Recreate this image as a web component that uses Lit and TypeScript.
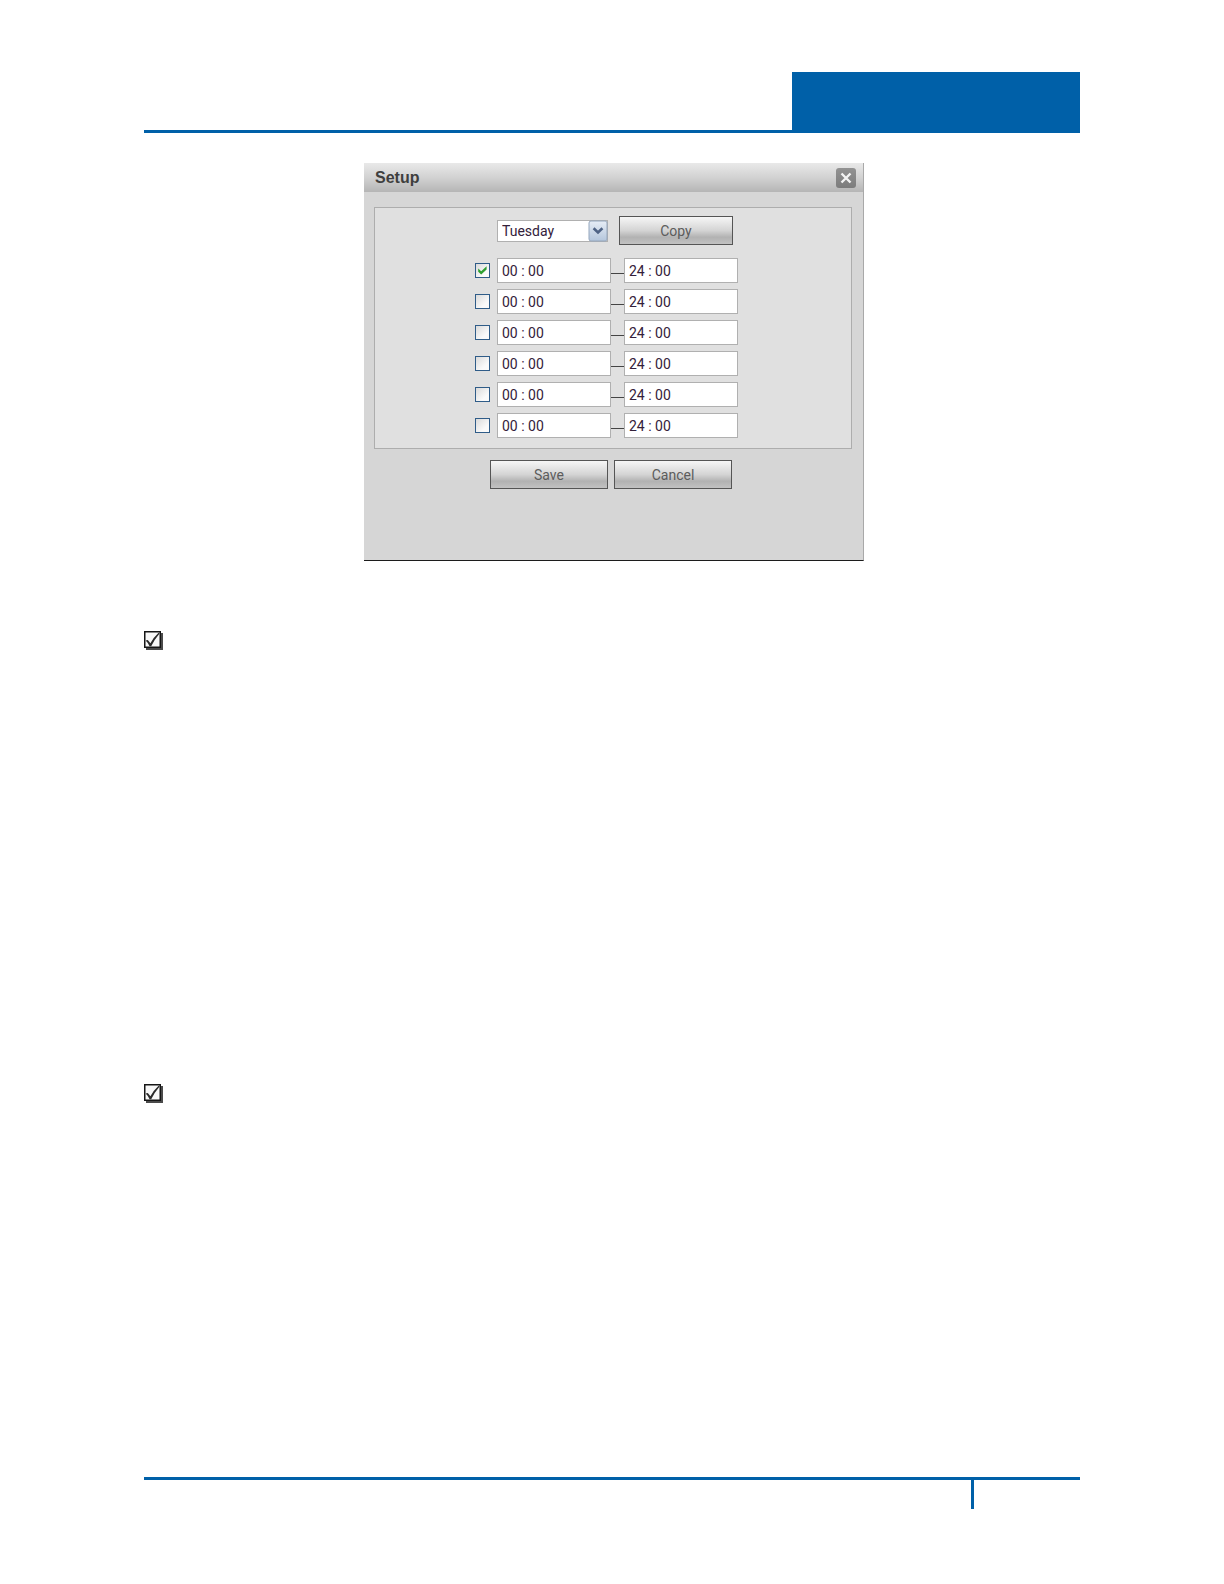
import { LitElement, html, css, svg } from "lit";
import { customElement, property, state } from "lit/decorators.js";

const DAYS = ["Sunday", "Monday", "Tuesday", "Wednesday", "Thursday", "Friday", "Saturday"];

interface Period {
  enabled: boolean;
  start: string;
  end: string;
}

@customElement("note-mark")
export class NoteMark extends LitElement {
  static styles = css`
    :host {
      display: block;
      line-height: 0;
    }
  `;

  render() {
    return html`<svg width="19" height="19" viewBox="0 0 19 19" aria-hidden="true">
      ${svg`
        <rect x="2" y="2" width="17" height="17" fill="#4a4a4a"></rect>
        <rect x="0.75" y="0.75" width="15.5" height="15.5" fill="#f8f8f8" stroke="#151515" stroke-width="1.5"></rect>
        <path d="M1.6 9.6 L3.8 9 L6.4 12.2 Q9.6 6.4 14.6 1.8 L15.6 2.4 Q10.6 8.2 7.2 15.2 L5.6 15.2 Q4 11.8 1.6 9.6 Z" fill="#2a2a2a"></path>
      `}
    </svg>`;
  }
}

@customElement("setup-dialog")
export class SetupDialog extends LitElement {
  @property({ type: String }) day = "Tuesday";

  @state() private periods: Period[] = Array.from({ length: 6 }, (_, i) => ({
    enabled: i === 0,
    start: "00 : 00",
    end: "24 : 00",
  }));

  static styles = css`
    :host {
      display: block;
      font-family: Roboto, "Liberation Sans", sans-serif;
      font-size: 14px;
    }
    * {
      box-sizing: border-box;
    }
    .dialog {
      background: #d6d6d6;
      border-right: 1px solid #a9a9a9;
      border-bottom: 1px solid #1c1c1c;
    }
    .titlebar {
      display: flex;
      align-items: center;
      justify-content: space-between;
      height: 29px;
      padding: 0 7px 0 11px;
      background: linear-gradient(#e9e9e9, #d2d2d2 50%, #b5b5b5);
    }
    .title {
      margin: 0;
      font: bold 16px/20px "Liberation Sans", Arial, sans-serif;
      color: #3f3f3f;
    }
    .close {
      display: block;
      width: 20px;
      height: 20px;
      padding: 0;
      border: 0;
      border-radius: 3px;
      background: linear-gradient(#929292, #7c7c7c);
      line-height: 0;
    }
    .content {
      padding: 15px 11px 71px 10px;
    }
    .schedule {
      display: flex;
      flex-direction: column;
      gap: 13px;
      min-width: 0;
      margin: 0;
      padding: 8px 0 10px 100px;
      border: 1px solid #adadad;
      background: #e0e0e0;
    }
    .day-row {
      display: flex;
      align-items: center;
      gap: 11px;
      padding-left: 22px;
    }
    .picker {
      display: grid;
      width: 111px;
      height: 22px;
    }
    .picker > * {
      grid-area: 1 / 1;
    }
    .select {
      appearance: none;
      width: 100%;
      margin: 0;
      padding: 0 22px 0 4px;
      border: 1px solid #b0b0b0;
      border-radius: 0;
      background: #fff;
      color: #33203a;
      font: inherit;
    }
    .arrow {
      justify-self: end;
      pointer-events: none;
    }
    .button {
      width: 118px;
      height: 29px;
      padding: 0;
      border: 1px solid #555;
      border-radius: 0;
      background: linear-gradient(#f6f6f6, #d4d4d4 50%, #b2b2b2 75%, #c2c2c2);
      color: #5c5c5c;
      font: inherit;
    }
    .copy {
      width: 114px;
    }
    .periods {
      display: grid;
      gap: 6px;
    }
    .period {
      display: flex;
      align-items: flex-start;
    }
    .box {
      display: grid;
      padding: 5px 7px 0 0;
    }
    .box > * {
      grid-area: 1 / 1;
    }
    .check {
      appearance: none;
      width: 15px;
      height: 15px;
      margin: 0;
      border: 1px solid #2f5c88;
      background: linear-gradient(135deg, #dadada, #fafafa 70%);
    }
    .tick {
      pointer-events: none;
    }
    .time {
      width: 114px;
      height: 25px;
      margin: 0;
      padding: 0 4px;
      border: 1px solid #b0b0b0;
      border-radius: 0;
      background: #fff;
      color: #33203a;
      font: inherit;
    }
    .dash {
      width: 13px;
      height: 1px;
      margin-top: 15px;
      background: #444;
    }
    .actions {
      display: flex;
      gap: 6px;
      padding: 11px 0 0 116px;
    }
  `;

  private toggle(index: number) {
    this.periods = this.periods.map((p, i) => (i === index ? { ...p, enabled: !p.enabled } : p));
  }

  private renderPeriod(period: Period, index: number) {
    const n = index + 1;
    return html`<div class="period">
      <div class="box">
        <input
          class="check"
          type="checkbox"
          aria-label="Enable period ${n}"
          .checked=${period.enabled}
          @change=${() => this.toggle(index)}
        />
        ${period.enabled
          ? html`<svg class="tick" width="15" height="15" viewBox="0 0 15 15" aria-hidden="true">
              <path d="M3.2 5.6 L6.2 8.2 L11.6 3.2 V6.4 L6.2 11.6 L3.2 8.8 Z" fill="#2fa030"></path>
            </svg>`
          : null}
      </div>
      <input class="time" type="text" aria-label="Period ${n} start" .value=${period.start} />
      <span class="dash"></span>
      <input class="time" type="text" aria-label="Period ${n} end" .value=${period.end} />
    </div>`;
  }

  render() {
    return html`<section class="dialog" role="dialog" aria-labelledby="title">
      <header class="titlebar">
        <h2 class="title" id="title">Setup</h2>
        <button class="close" type="button" aria-label="Close">
          <svg width="20" height="20" viewBox="0 0 20 20" aria-hidden="true">
            <path d="M5.5 5.5 L14.5 14.5 M14.5 5.5 L5.5 14.5" stroke="#f4f4f4" stroke-width="2.4" fill="none"></path>
          </svg>
        </button>
      </header>
      <div class="content">
        <fieldset class="schedule" aria-label="Schedule">
          <div class="day-row">
            <div class="picker">
              <select class="select" aria-label="Day">
                ${DAYS.map((d) => html`<option ?selected=${d === this.day}>${d}</option>`)}
              </select>
              <svg class="arrow" width="20" height="22" viewBox="0 0 20 22" aria-hidden="true">
                <defs>
                  <linearGradient id="face" x1="0" y1="0" x2="0" y2="1">
                    <stop offset="0" stop-color="#e6edf6"></stop>
                    <stop offset="1" stop-color="#b4c6dc"></stop>
                  </linearGradient>
                </defs>
                <rect x="1" y="1" width="18" height="20" rx="2" fill="url(#face)" stroke="#94a6bd"></rect>
                <path d="M5.6 8.2 L10 12.4 L14.4 8.2" stroke="#4f6385" stroke-width="2.6" fill="none"></path>
              </svg>
            </div>
            <button class="button copy" type="button">Copy</button>
          </div>
          <div class="periods">${this.periods.map((p, i) => this.renderPeriod(p, i))}</div>
        </fieldset>
        <div class="actions">
          <button class="button" type="button">Save</button>
          <button class="button" type="button">Cancel</button>
        </div>
      </div>
    </section>`;
  }
}

@customElement("app-root")
export class AppRoot extends LitElement {
  static styles = css`
    :host {
      display: block;
      background: #fff;
    }
    .page {
      box-sizing: border-box;
      display: flex;
      flex-direction: column;
      min-height: 100vh;
      padding: 72px 144px 75px;
    }
    .masthead {
      display: grid;
      grid-template-columns: 9fr 4fr;
      border-bottom: 3px solid #0060a8;
    }
    .banner {
      grid-column: 2;
      height: 58px;
      background: #0060a8;
    }
    .figure {
      display: flex;
      justify-content: center;
      padding: 30px 0 70px 4px;
    }
    .dialog {
      flex: 0 1 500px;
    }
    .notes {
      display: grid;
      gap: 434px;
    }
    .footer {
      display: grid;
      grid-template-columns: 1fr 109px;
      margin-top: auto;
      border-top: 3px solid #0060a8;
    }
    .folio {
      grid-column: 2;
      height: 29px;
      border-left: 3px solid #0060a8;
    }
  `;

  render() {
    return html`<div class="page">
      <header class="masthead"><div class="banner"></div></header>
      <main>
        <div class="figure"><setup-dialog class="dialog" day="Tuesday"></setup-dialog></div>
        <div class="notes">
          <note-mark></note-mark>
          <note-mark></note-mark>
        </div>
      </main>
      <footer class="footer"><div class="folio"></div></footer>
    </div>`;
  }
}
